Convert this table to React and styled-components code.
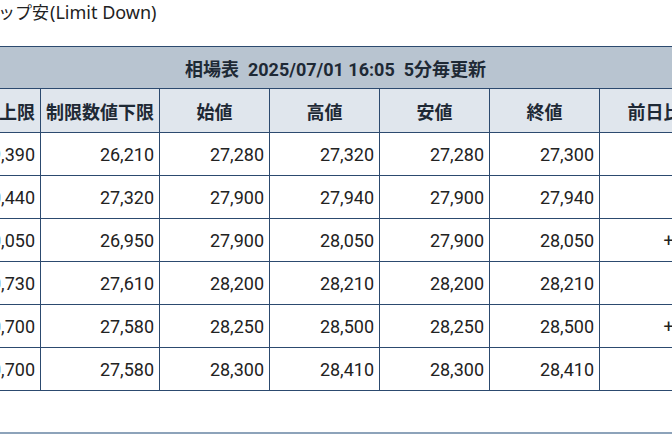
import React from "react";
import styled, { createGlobalStyle } from "styled-components";

const GlobalStyle = createGlobalStyle`
  html, body {
    margin: 0;
    padding: 0;
    background: #ffffff;
  }
  body {
    font-family: Roboto, "Noto Sans CJK JP", sans-serif;
    color: #222;
    overflow: hidden;
  }
`;

const Page = styled.div`
  width: 672px;
  height: 446px;
  overflow: hidden;
`;

const Caption = styled.div`
  margin-left: -36px;
  font-family: "Noto Sans CJK JP", sans-serif;
  font-size: 17px;
  line-height: 24px;
  color: #222;
  white-space: nowrap;
`;

const Latin = styled.span`
  font-family: "Noto Sans", "Noto Sans CJK JP", sans-serif;
  font-size: 18px;
  margin-left: 1px;
`;

const Table = styled.table`
  margin-top: 22px;
  margin-left: -199px;
  border-collapse: collapse;
  table-layout: fixed;
  width: 1068px;
`;

const TitleCell = styled.th`
  height: 41px;
  padding: 0;
  background: #b8c4d0;
  border: 1px solid #2c4a6f;
  font-size: 18px;
  font-weight: 700;
  color: #1e2935;
  white-space: pre;
  text-align: center;
`;

const HeadCell = styled.th`
  height: 43px;
  padding: 0 4px;
  background: #e0e6ed;
  border: 1px solid #2c4a6f;
  font-family: "Noto Sans CJK JP", sans-serif;
  font-size: 18px;
  font-weight: 700;
  color: #1e2935;
  text-align: center;
  white-space: nowrap;
`;

const Cell = styled.td`
  height: 42px;
  padding: 0 5px 0 4px;
  border: 1px solid #2c4a6f;
  font-size: 18px;
  color: #222;
  text-align: ${(p) => (p.$center ? "center" : "right")};
  white-space: nowrap;
`;

const Divider = styled.div`
  margin-top: 41px;
  height: 2px;
  background: #8da3ba;
`;

const widths = [120, 119, 119, 110, 110, 110, 110, 110, 160];

const heads = [
  "日付",
  "制限数値上限",
  "制限数値下限",
  "始値",
  "高値",
  "安値",
  "終値",
  "前日比",
  "出来高",
];

const rows = [
  ["2025/06/24", "29,390", "26,210", "27,280", "27,320", "27,280", "27,300", "-40", "12"],
  ["2025/06/25", "30,440", "27,320", "27,900", "27,940", "27,900", "27,940", "-30", "8"],
  ["2025/06/26", "30,050", "26,950", "27,900", "28,050", "27,900", "28,050", "+110", "15"],
  ["2025/06/27", "30,730", "27,610", "28,200", "28,210", "28,200", "28,210", "-60", "6"],
  ["2025/06/30", "30,700", "27,580", "28,250", "28,500", "28,250", "28,500", "+290", "21"],
  ["2025/07/01", "30,700", "27,580", "28,300", "28,410", "28,300", "28,410", "-90", "9"],
];

export default function App() {
  return (
    <Page>
      <GlobalStyle />
      <Caption>
        ストップ安<Latin>(Limit Down)</Latin>
      </Caption>
      <Table>
        <colgroup>
          {widths.map((w, i) => (
            <col key={i} style={{ width: w }} />
          ))}
        </colgroup>
        <thead>
          <tr>
            <TitleCell colSpan={heads.length}>
              {"相場表  2025/07/01 16:05  5分毎更新"}
            </TitleCell>
          </tr>
          <tr>
            {heads.map((h) => (
              <HeadCell key={h}>{h}</HeadCell>
            ))}
          </tr>
        </thead>
        <tbody>
          {rows.map((r) => (
            <tr key={r[0]}>
              {r.map((v, i) => (
                <Cell key={i} $center={i === 0}>
                  {v}
                </Cell>
              ))}
            </tr>
          ))}
        </tbody>
      </Table>
      <Divider />
    </Page>
  );
}
